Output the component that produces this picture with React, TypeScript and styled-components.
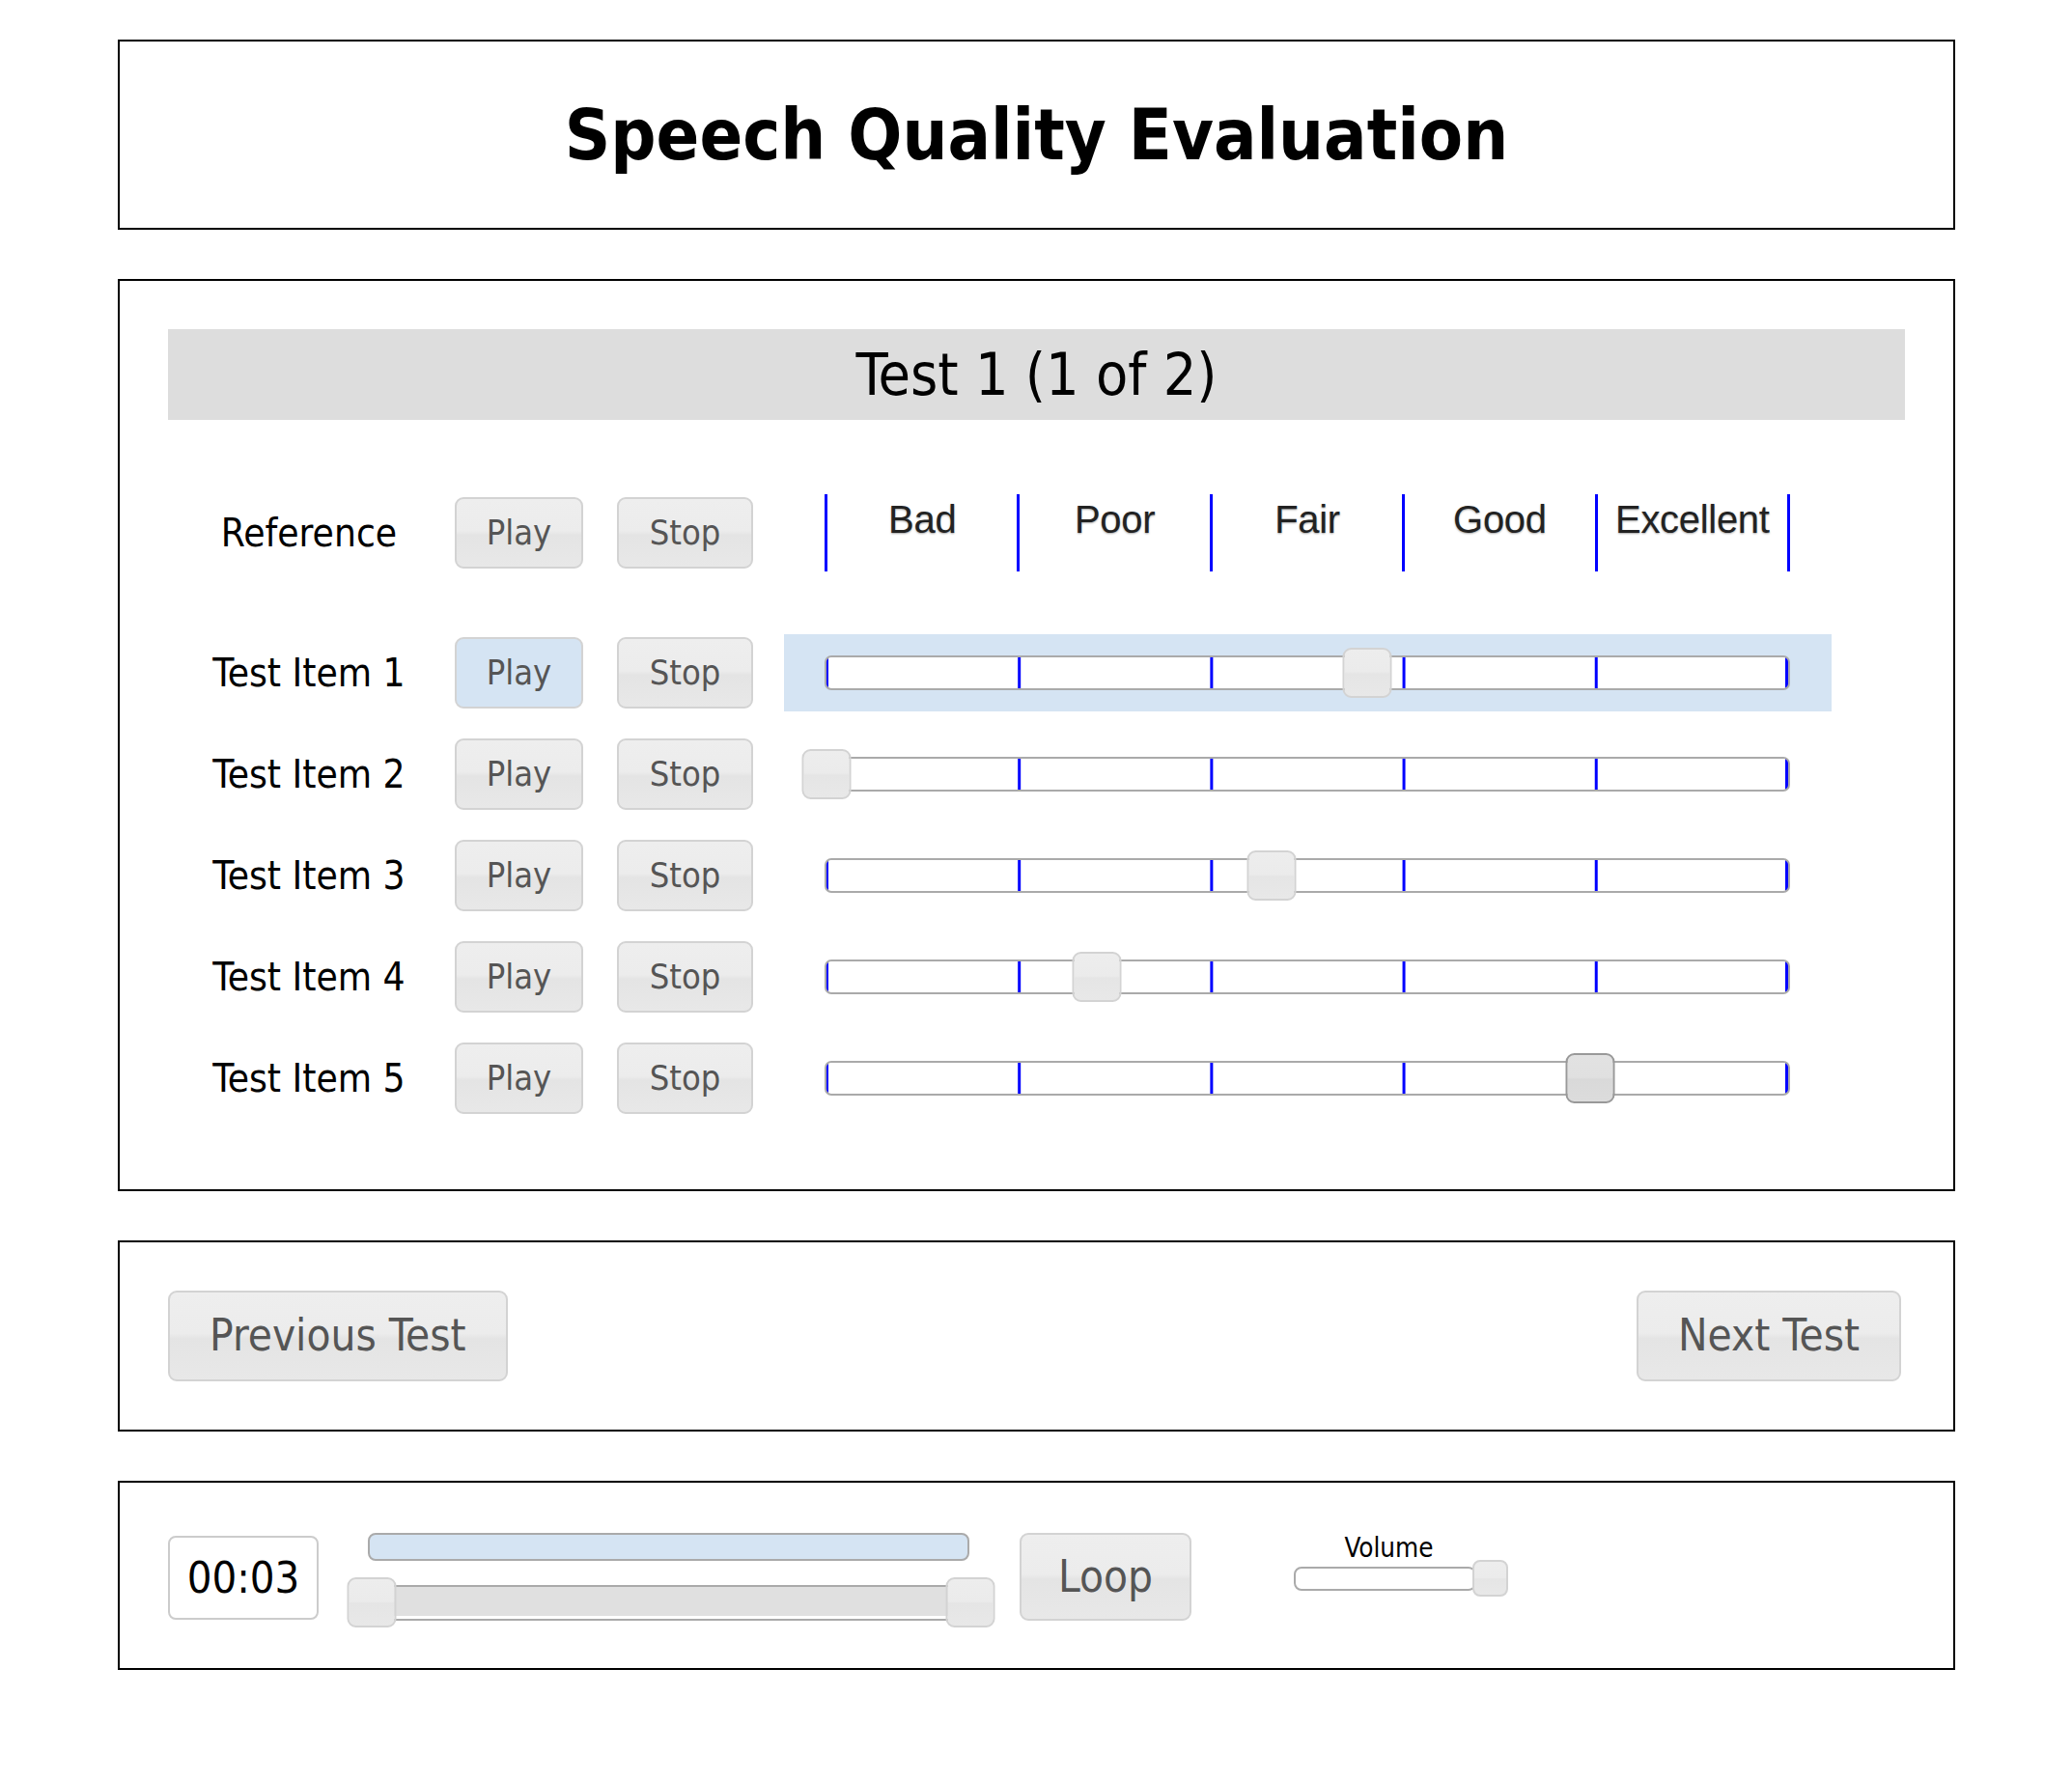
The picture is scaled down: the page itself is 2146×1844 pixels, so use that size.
import React from "react";
import styled, { createGlobalStyle, css } from "styled-components";

const GlobalStyle = createGlobalStyle`
  html, body { margin: 0; padding: 0; background: #fff; }
  body {
    font-family: "DejaVu Sans Condensed", "DejaVu Sans", sans-serif;
    color: #000;
  }
  * { box-sizing: border-box; }
`;

const FONT = `"DejaVu Sans Condensed", "DejaVu Sans", sans-serif`;

const Page = styled.div`
  padding: 41px 121px 112px 122px;
  display: flex;
  flex-direction: column;
  gap: 51px;
`;

const Panel = styled.section`
  border: 2px solid #000;
  padding: 50px;
`;

const TitlePanel = styled(Panel)`
  height: 197px;
  padding: 0;
  display: flex;
  align-items: center;
  justify-content: center;
`;

const Title = styled.h1`
  margin: 0;
  font-family: ${FONT};
  font-weight: bold;
  font-size: 73.4px;
`;

const TestHeader = styled.div`
  height: 94px;
  background: #dddddd;
  display: flex;
  align-items: center;
  justify-content: center;
  font-size: 60.5px;
  margin-bottom: 77px;
`;

const Rows = styled.div`
  display: flex;
  flex-direction: column;
  gap: 25px;
  padding-bottom: 25px;
`;

const Row = styled.div<{ $first?: boolean }>`
  display: grid;
  grid-template-columns: 297px 168px 173px 1085px;
  align-items: center;
  height: 80px;
  margin-bottom: ${(p) => (p.$first ? "40px" : "0")};
`;

const RowLabel = styled.div`
  text-align: center;
  font-size: 40.3px;
  color: #000;
  padding-right: 5px;
`;

const buttonSkin = css<{ $active?: boolean }>`
  font-family: ${FONT};
  border: 2px solid #d3d3d3;
  border-radius: 9px;
  color: #555;
  display: inline-flex;
  align-items: center;
  justify-content: center;
  line-height: 1;
  cursor: pointer;
  background: ${(p) =>
    p.$active
      ? "#d5e4f3"
      : "linear-gradient(to bottom, #eeeeee 0%, #ececec 47%, #e4e4e4 53%, #e8e8e8 100%)"};
`;

const RowButton = styled.button<{ $active?: boolean; $w: number }>`
  ${buttonSkin};
  justify-self: start;
  width: ${(p) => p.$w}px;
  height: 74px;
  padding: 0;
  font-size: 36px;
`;

const NavButton = styled.button`
  ${buttonSkin};
  height: 94px;
  padding: 0 41px;
  font-size: 45.5px;
`;

const LoopButton = styled.button`
  ${buttonSkin};
  width: 178px;
  height: 91px;
  margin-left: 26px;
  font-size: 45.5px;
`;

const SliderCell = styled.div<{ $active?: boolean }>`
  height: 80px;
  padding: 0 43px 0 42px;
  display: flex;
  align-items: center;
  background: ${(p) => (p.$active ? "#d5e4f3" : "transparent")};
`;

const Scale = styled.div`
  display: flex;
  width: 1000px;
  height: 80px;
`;

const ScaleCell = styled.div<{ $last?: boolean }>`
  flex: 1;
  border-left: 3px solid #0000ff;
  border-right: ${(p) => (p.$last ? "3px solid #0000ff" : "none")};
  text-align: center;
  padding-top: 4px;
  font-family: "Liberation Sans", Arial, sans-serif;
  font-size: 40px;
  color: #222;
  text-shadow: 0 1px 2px rgba(0, 0, 0, 0.35);
  letter-spacing: -0.3px;
`;

const Track = styled.div`
  position: relative;
  flex: 1;
  height: 36px;
  border: 2px solid #aaaaaa;
  border-radius: 7px;
  background:
    linear-gradient(270deg, #0000ff 3px, transparent 3px) 0 0 / 100% 100% no-repeat,
    linear-gradient(90deg, #0000ff 3px, transparent 3px) -1px 0 / 20% 100% repeat-x,
    #ffffff;
`;

const Handle = styled.span<{ $hover?: boolean }>`
  position: absolute;
  top: -10px;
  width: 51px;
  height: 52px;
  transform: translateX(-50%);
  border-radius: 9px;
  border: 2px solid ${(p) => (p.$hover ? "#999999" : "#d3d3d3")};
  background: ${(p) =>
    p.$hover
      ? "linear-gradient(to bottom, #e2e2e2 0%, #e0e0e0 48%, #d9d9d9 52%, #dcdcdc 100%)"
      : "linear-gradient(to bottom, #ededed 0%, #ebebeb 48%, #e5e5e5 52%, #e8e8e8 100%)"};
`;

const NavPanel = styled(Panel)`
  display: flex;
  justify-content: space-between;
  padding-right: 54px;
`;

const PlayerPanel = styled(Panel)`
  display: flex;
  align-items: flex-start;
  padding: 52px 50px 49px;
`;

const TimeBox = styled.div`
  width: 156px;
  height: 87px;
  margin-top: 3px;
  border: 2px solid #cccccc;
  border-radius: 8px;
  background: #fff;
  display: flex;
  align-items: center;
  justify-content: center;
  font-size: 45px;
  color: #000;
`;

const ProgressColumn = styled.div`
  width: 671px;
  margin-left: 29px;
  display: flex;
  flex-direction: column;
`;

const ProgressBar = styled.div`
  height: 29px;
  margin: 0 26px 0 22px;
  background: #d5e4f3;
  border: 2px solid #aaaaaa;
  border-radius: 8px;
`;

const RangeTrack = styled.div`
  position: relative;
  height: 37px;
  margin: 25px 25px 0 26px;
  border: 2px solid #aaaaaa;
  border-left: none;
  border-right: none;
  background: #e0e0e0;
  box-shadow: inset 0 -3px 0 #ffffff;
`;

const VolumeGroup = styled.div`
  width: 189px;
  margin-left: 106px;
  margin-top: -1px;
  display: flex;
  flex-direction: column;
  gap: 3px;
`;

const VolumeLabel = styled.div`
  text-align: center;
  padding-left: 8px;
  font-size: 27.6px;
  color: #000;
`;

const VolumeTrack = styled.div`
  position: relative;
  height: 25px;
  border: 2px solid #aaaaaa;
  border-radius: 8px;
  background: #fff;
`;

const VolumeHandle = styled.span`
  position: absolute;
  top: -9px;
  left: calc(100% - 2px);
  width: 37px;
  height: 38px;
  border-radius: 8px;
  border: 2px solid #d3d3d3;
  background: linear-gradient(to bottom, #ededed 0%, #ebebeb 48%, #e5e5e5 52%, #e8e8e8 100%);
`;

const labels = ["Bad", "Poor", "Fair", "Good", "Excellent"];

const items = [
  { name: "Test Item 1", value: 56.2, active: true, hover: false },
  { name: "Test Item 2", value: 0, active: false, hover: false },
  { name: "Test Item 3", value: 46.3, active: false, hover: false },
  { name: "Test Item 4", value: 28.1, active: false, hover: false },
  { name: "Test Item 5", value: 79.4, active: false, hover: true },
];

export default function App() {
  return (
    <>
      <GlobalStyle />
      <Page>
        <TitlePanel>
          <Title>Speech Quality Evaluation</Title>
        </TitlePanel>

        <Panel>
          <TestHeader>Test 1 (1 of 2)</TestHeader>
          <Rows>
            <Row $first>
              <RowLabel>Reference</RowLabel>
              <RowButton $w={133}>Play</RowButton>
              <RowButton $w={141}>Stop</RowButton>
              <SliderCell>
                <Scale>
                  {labels.map((l, i) => (
                    <ScaleCell key={l} $last={i === labels.length - 1}>
                      {l}
                    </ScaleCell>
                  ))}
                </Scale>
              </SliderCell>
            </Row>
            {items.map((it) => (
              <Row key={it.name}>
                <RowLabel>{it.name}</RowLabel>
                <RowButton $w={133} $active={it.active}>Play</RowButton>
                <RowButton $w={141}>Stop</RowButton>
                <SliderCell $active={it.active}>
                  <Track>
                    <Handle $hover={it.hover} style={{ left: `${it.value}%` }} />
                  </Track>
                </SliderCell>
              </Row>
            ))}
          </Rows>
        </Panel>

        <NavPanel>
          <NavButton>Previous Test</NavButton>
          <NavButton>Next Test</NavButton>
        </NavPanel>

        <PlayerPanel>
          <TimeBox>00:03</TimeBox>
          <ProgressColumn>
            <ProgressBar />
            <RangeTrack>
              <Handle style={{ left: "0%" }} />
              <Handle style={{ left: "100%" }} />
            </RangeTrack>
          </ProgressColumn>
          <LoopButton>Loop</LoopButton>
          <VolumeGroup>
            <VolumeLabel>Volume</VolumeLabel>
            <VolumeTrack>
              <VolumeHandle />
            </VolumeTrack>
          </VolumeGroup>
        </PlayerPanel>
      </Page>
    </>
  );
}
